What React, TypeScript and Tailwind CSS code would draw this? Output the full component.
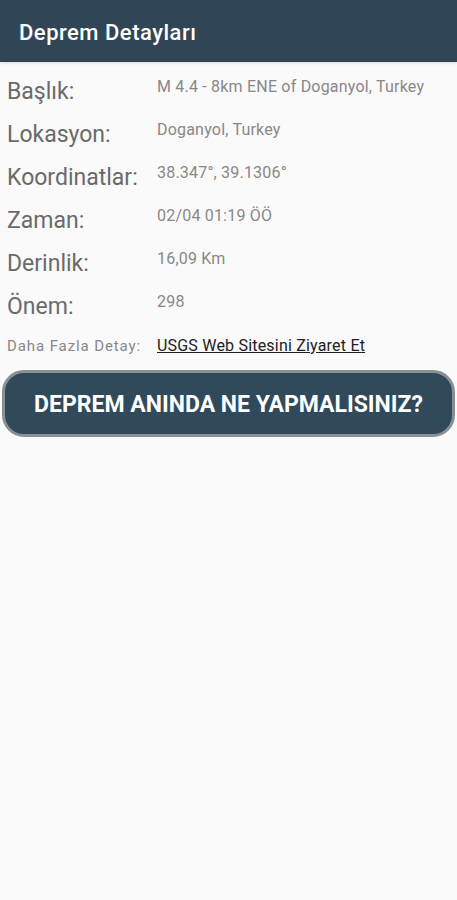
import React from "react";

const rows = [
  { label: "Başlık:", value: "M 4.4 - 8km ENE of Doganyol, Turkey" },
  { label: "Lokasyon:", value: "Doganyol, Turkey" },
  { label: "Koordinatlar:", value: "38.347°, 39.1306°" },
  { label: "Zaman:", value: "02/04 01:19 ÖÖ" },
  { label: "Derinlik:", value: "16,09 Km" },
  { label: "Önem:", value: "298" },
];

export default function App() {
  return (
    <div className="min-h-[900px] w-full bg-[#fafafa] font-['Roboto',sans-serif]">
      <header className="flex h-[62px] items-center bg-[#304656] px-[19px] pt-[2px] shadow-sm">
        <h1 className="text-[22px] font-medium tracking-[0.5px] text-white">Deprem Detayları</h1>
      </header>

      <div className="pt-[8px]">
        {rows.map((r) => (
          <div key={r.label} className="flex h-[43px] items-center">
            <span className="w-[157px] shrink-0 pl-[7px] text-[23px] leading-[28px] text-[#6a6a6a]">
              {r.label}
            </span>
            <span className="mb-[10px] text-[16px] leading-[20px] tracking-[0.2px] text-[#888888]">
              {r.value}
            </span>
          </div>
        ))}
        <div className="flex h-[36px] items-center">
          <span className="w-[157px] shrink-0 pl-[7px] text-[15px] tracking-[0.9px] text-[#888888]">
            Daha Fazla Detay:
          </span>
          <a href="#" className="text-[16px] tracking-[0.2px] text-[#212121] underline">
            USGS Web Sitesini Ziyaret Et
          </a>
        </div>
      </div>

      <div className="px-[2px] pt-[6px]">
        <button className="flex h-[67px] w-full items-center justify-center rounded-[22px] border-[3px] border-[#8a8f93] bg-[#304a5c] pt-[3px] text-[23px] font-bold text-white">
          DEPREM ANINDA NE YAPMALISINIZ?
        </button>
      </div>
    </div>
  );
}
